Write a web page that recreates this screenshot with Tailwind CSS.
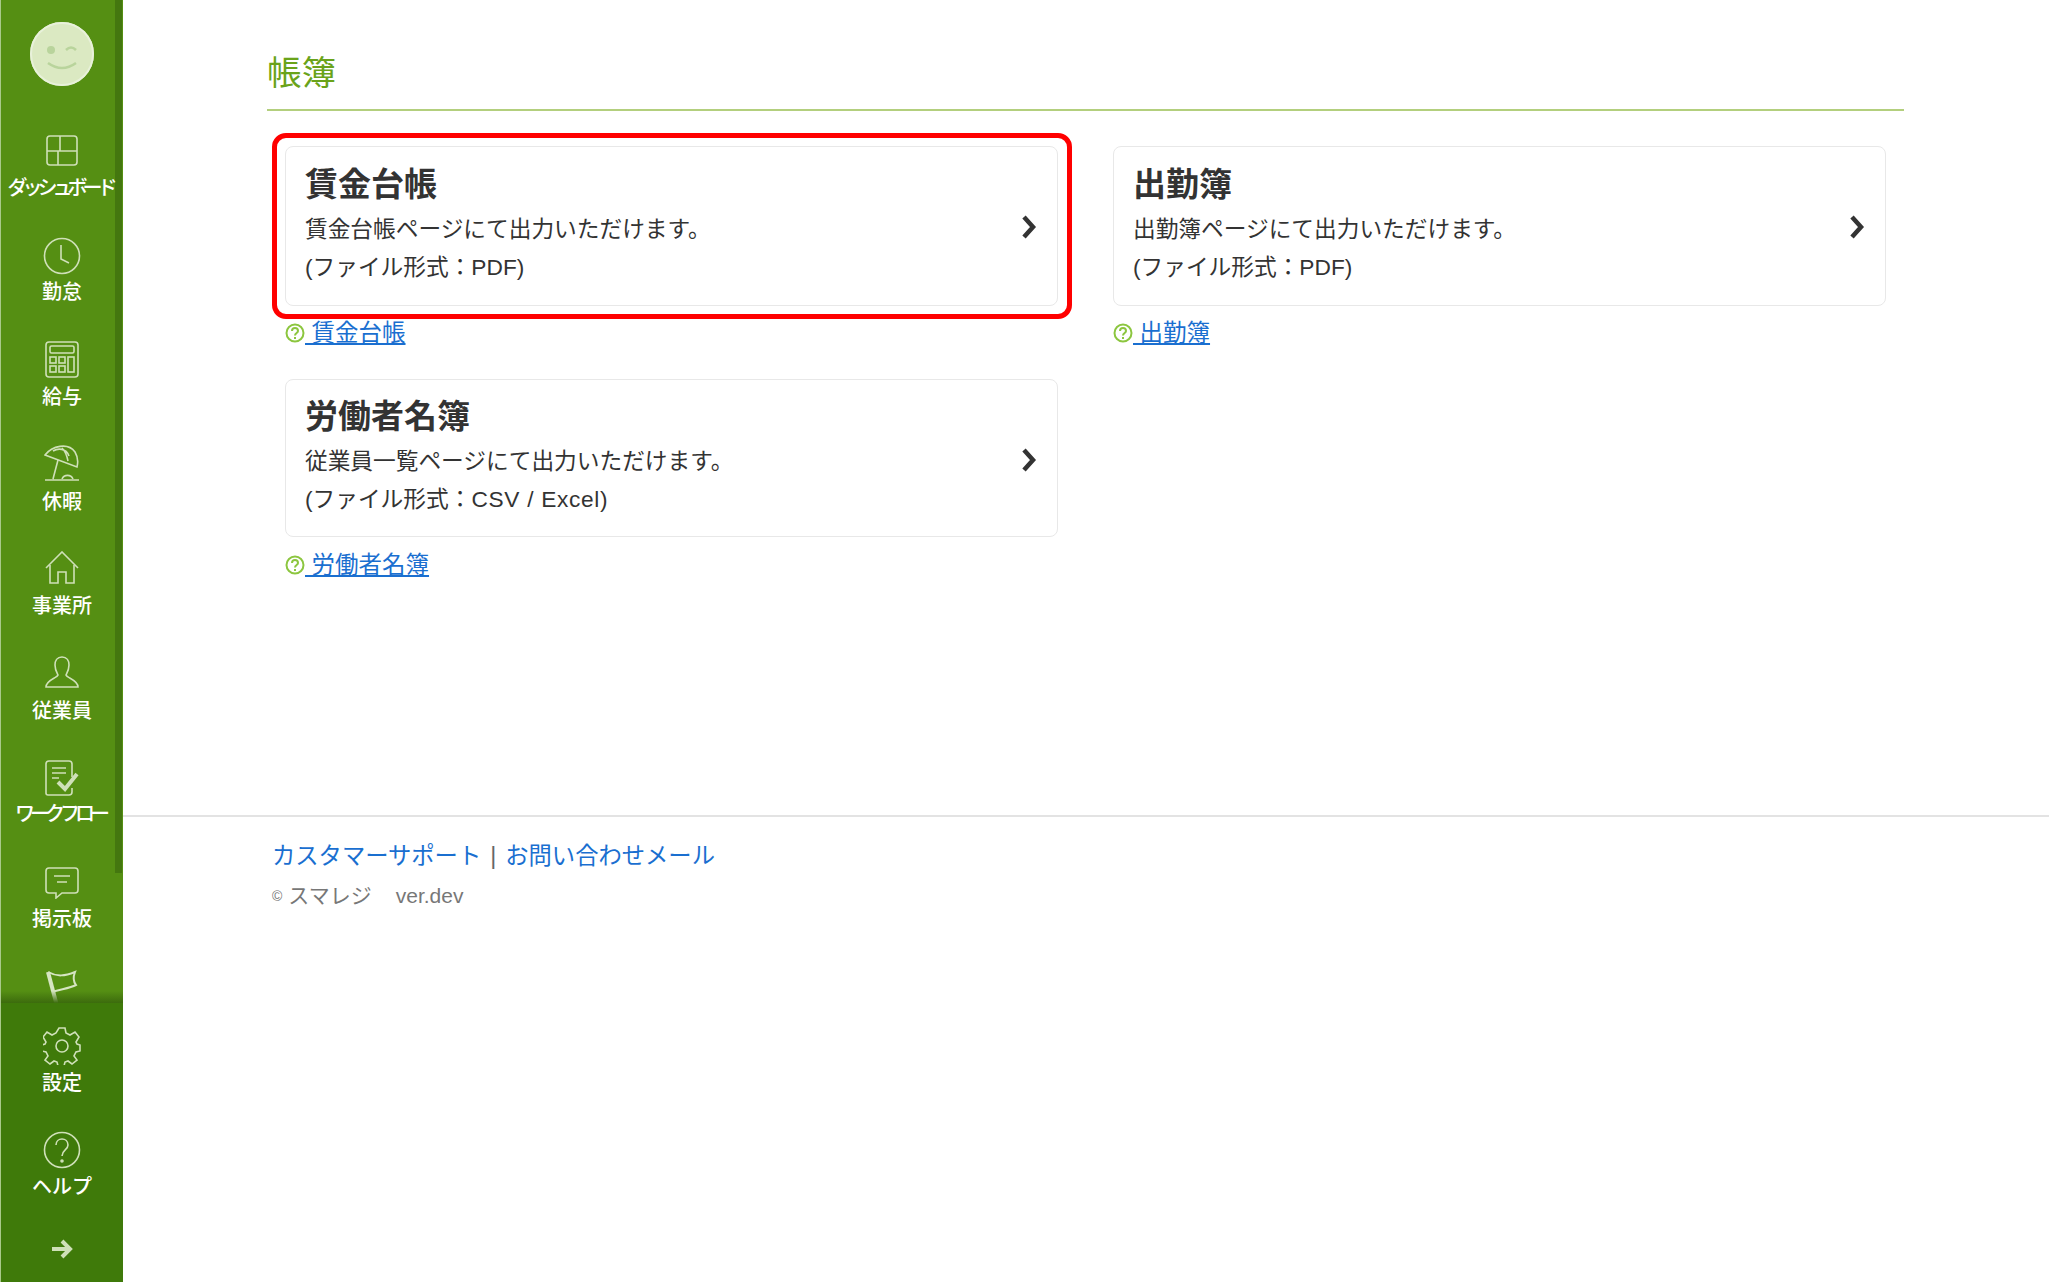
<!DOCTYPE html>
<html lang="ja">
<head>
  <meta charset="UTF-8">
  <title>帳簿</title>
  <script src="https://cdn.jsdelivr.net/npm/@tailwindcss/browser@4"></script>
</head>
<body class="bg-white font-['Liberation_Sans','Noto_Sans_CJK_JP',sans-serif] text-[#333]">
  <div class="flex h-[1282px] w-[2049px] overflow-hidden">

    <!-- sidebar -->
    <aside class="relative flex w-[123px] shrink-0 flex-col border-l border-[#a9c98a] bg-[#558f13] text-white">
      <div class="absolute right-[1px] top-0 h-[873px] w-[7px] bg-[#44770f]"></div>

      <div class="relative flex h-[1003px] flex-col overflow-hidden">
        <div class="flex h-[109px] shrink-0 items-center justify-center pb-[2px]">
          <svg width="66" height="66" viewBox="0 0 66 66">
            <circle cx="33" cy="33" r="32" fill="#dbe9c2"/>
            <circle cx="33" cy="33" r="31" fill="none" stroke="#e8f1da" stroke-width="2"/>
            <circle cx="22" cy="29" r="4" fill="#b9d49c"/>
            <path d="M37 29q5-5 10 0" fill="none" stroke="#b9d49c" stroke-width="2.500"/>
            <path d="M19 42q14 10 28 0" fill="none" stroke="#b9d49c" stroke-width="2.500"/>
          </svg>
        </div>

        <a class="flex h-[104.5px] shrink-0 flex-col items-center pt-[26px]">
          <svg class="h-[32px] w-[32px]" viewBox="0 0 32 32" fill="none" stroke="#cfe0b8" stroke-width="1.600"><rect x="1" y="1" width="30" height="29" rx="3"/><path d="M1 16h30M14 1v15M12 16v14"/></svg>
          <span class="mt-[8px] whitespace-nowrap pr-[4px] text-[20px] leading-[26px] font-medium tracking-[-5px]">ダッシュボード</span>
        </a>
        <a class="flex h-[104.5px] shrink-0 flex-col items-center pt-[23px]">
          <svg class="h-[38px] w-[38px]" viewBox="0 0 38 38" fill="none" stroke="#cfe0b8" stroke-width="1.600"><circle cx="19" cy="19" r="17.500"/><path d="M18 8v14l8 4"/></svg>
          <span class="mt-[4px] text-[20px] leading-[26px] font-medium">勤怠</span>
        </a>
        <a class="flex h-[104.5px] shrink-0 flex-col items-center pt-[23px]">
          <svg class="h-[38px] w-[34px]" viewBox="0 0 34 38" fill="none" stroke="#cfe0b8" stroke-width="1.600"><rect x="1" y="1" width="32" height="35" rx="3"/><rect x="5" y="5" width="24" height="7" rx="1.500"/><rect x="5" y="16" width="6" height="6"/><rect x="14" y="16" width="6" height="6"/><rect x="23" y="16" width="6" height="15"/><rect x="5" y="25" width="6" height="6"/><rect x="14" y="25" width="6" height="6"/></svg>
          <span class="mt-[5px] text-[20px] leading-[26px] font-medium">給与</span>
        </a>
        <a class="flex h-[104.5px] shrink-0 flex-col items-center pt-[22px]">
          <svg class="h-[36px] w-[36px]" viewBox="0 0 36 36" fill="none" stroke="#cfe0b8" stroke-width="1.600"><path d="M1 10C8 1 24-3 31 7c3 5 3 11 2 15z"/><path d="M9 6c5-3 13-3 16 5M18 3c3 3 5 8 6 13M14 15L9 34M1 35h34"/><path d="M18 34a6 6 0 0 1 11 0"/></svg>
          <span class="mt-[8px] text-[20px] leading-[26px] font-medium">休暇</span>
        </a>
        <a class="flex h-[104.5px] shrink-0 flex-col items-center pt-[24px]">
          <svg class="h-[34px] w-[34px]" viewBox="0 0 34 34" fill="none" stroke="#cfe0b8" stroke-width="1.600"><path d="M1 17L17 1l16 16"/><path d="M5 14v18h8V21h8v11h8V14"/></svg>
          <span class="mt-[8px] text-[20px] leading-[26px] font-medium">事業所</span>
        </a>
        <a class="flex h-[104.5px] shrink-0 flex-col items-center pt-[24px]">
          <svg class="h-[32px] w-[34px]" viewBox="0 0 34 32" fill="none" stroke="#cfe0b8" stroke-width="1.600"><path d="M17 1c5 0 7 4 7 8 0 5-2 8-3 10 1 3 12 5 12 12H1c0-7 11-9 12-12-1-2-3-5-3-10 0-4 2-8 7-8z"/></svg>
          <span class="mt-[10px] text-[20px] leading-[26px] font-medium">従業員</span>
        </a>
        <a class="flex h-[104.5px] shrink-0 flex-col items-center pt-[24px]">
          <svg class="h-[36px] w-[36px]" viewBox="0 0 36 36" fill="none" stroke="#cfe0b8" stroke-width="1.600"><path d="M28 17V4a3 3 0 0 0-3-3H5a3 3 0 0 0-3 3v29a2 2 0 0 0 2 2h21a3 3 0 0 0 3-3v-4"/><path d="M8 8h14M8 13h14M8 18h7"/><path d="M14 22l7 7L33 14" stroke-width="4"/></svg>
          <span class="mt-[5px] whitespace-nowrap pr-[4px] text-[20px] leading-[26px] font-medium tracking-[-5px]">ワークフロー</span>
        </a>
        <a class="flex h-[104.5px] shrink-0 flex-col items-center pt-[26px]">
          <svg class="h-[32px] w-[34px]" viewBox="0 0 34 32" fill="none" stroke="#cfe0b8" stroke-width="1.600"><path d="M4 1h26a3 3 0 0 1 3 3v19a3 3 0 0 1-3 3H17l-6 5v-5H4a3 3 0 0 1-3-3V4a3 3 0 0 1 3-3z"/><path d="M9 9h16M12 15h10"/></svg>
          <span class="mt-[7px] text-[20px] leading-[26px] font-medium">掲示板</span>
        </a>
        <a class="flex h-[104.5px] shrink-0 flex-col items-center pt-[25px]">
          <svg class="h-[36px] w-[34px]" viewBox="0 0 34 36" fill="none" stroke="#d6e5c2" stroke-width="2"><path d="M3 2l9 34" stroke-width="4"/><path d="M3 2c9 5 17 4 27 0-2 5-2 9 1 13-6 3-14 4-24 7"/></svg>
        </a>
        <div class="absolute bottom-0 left-0 h-[12px] w-full bg-gradient-to-b from-transparent to-[#3c6b0d]"></div>
      </div>

      <div class="flex flex-1 flex-col items-center bg-[#3f7a0a]">
        <a class="flex h-[104.5px] shrink-0 flex-col items-center pt-[24px]">
          <svg class="h-[38px] w-[38px]" viewBox="0 0 38 38" fill="none" stroke="#cfe0b8" stroke-width="1.600"><circle cx="19" cy="19" r="6"/><path d="M16 1h6l1 5 4 2 5-3 4 5-3 5 1 2 3 1v6l-4 1-2 4 3 4-5 4-4-3-3 1-1 4h-6l-1-4-3-1-4 3-5-4 3-4-2-4-4-1v-6l3-1 1-2-3-5 4-5 5 3 4-2z"/></svg>
          <span class="mt-[5px] text-[20px] leading-[26px] font-medium">設定</span>
        </a>
        <a class="flex h-[104.5px] shrink-0 flex-col items-center pt-[23px]">
          <svg class="h-[38px] w-[38px]" viewBox="0 0 38 38" fill="none" stroke="#cfe0b8" stroke-width="1.600"><circle cx="19" cy="19" r="17.500"/><path d="M13 14c0-4 3-6 6-6s6 2 6 6c0 5-6 5-6 11"/><circle cx="19" cy="30" r="1" fill="#cfe0b8"/></svg>
          <span class="mt-[5px] text-[20px] leading-[26px] font-medium">ヘルプ</span>
        </a>
        <svg class="mt-[27px] h-[20px] w-[22px]" viewBox="0 0 22 20" fill="none" stroke="#cfe0b8" stroke-width="4"><path d="M1 10h17M11 2l8 8-8 8"/></svg>
      </div>
    </aside>

    <!-- main -->
    <main class="flex min-w-0 flex-1 flex-col">
      <div class="h-[815px] shrink-0 pl-[144px] pr-[145px]">
        <h1 class="flex h-[111px] items-end border-b-2 border-[#b3cf7d] pb-[11px] text-[34.500px] leading-[50px] font-normal text-[#6aa31a]">帳簿</h1>

        <div class="mt-[35px] grid w-[1619px] grid-cols-[773px_773px] gap-x-[55px] pl-[18px]">
          <div>
            <div class="relative">
              <a class="flex h-[160px] items-center justify-between rounded-[8px] border border-[#e8e8e8] pl-[19px] pr-[20px]">
                <div class="-mt-[3px]">
                  <h2 class="text-[33px] leading-[42px] font-bold">賃金台帳</h2>
                  <p class="mt-[4px] text-[22.7px] leading-[38px]">賃金台帳ページにて出力いただけます。</p>
                  <p class="text-[22.7px] leading-[38px]">(ファイル形式：PDF)</p>
                </div>
                <svg class="mt-[2px] h-[24px] w-[16px]" viewBox="0 0 16 24" fill="none" stroke="#333" stroke-width="4.500"><path d="M3 2l9 10-9 10"/></svg>
              </a>
              <div class="absolute -top-[13px] -left-[13px] -right-[14px] -bottom-[13px] rounded-[14px] border-[5px] border-[#f00]"></div>
            </div>
            <div class="mt-[14px] flex h-[26px] items-center">
              <svg class="h-[20px] w-[20px]" viewBox="0 0 20 20" fill="none" stroke="#8cc63f" stroke-width="2"><circle cx="10" cy="10" r="8.500"/><path d="M7 8c0-2 1.500-3 3-3s3 1 3 3c0 2-3 2-3 4.500M10 14v2"/></svg>
              <a class="text-[23.5px] leading-[26px] text-[#1a6fd0] underline">&nbsp;賃金台帳</a>
            </div>
            <a class="mt-[33px] flex h-[158px] items-center justify-between rounded-[8px] border border-[#e8e8e8] pl-[19px] pr-[20px]">
              <div class="-mt-[2px]">
                <h2 class="text-[33px] leading-[42px] font-bold">労働者名簿</h2>
                <p class="mt-[4px] text-[22.7px] leading-[38px]">従業員一覧ページにて出力いただけます。</p>
                <p class="text-[22.7px] leading-[38px]">(ファイル形式：<span class="tracking-[0.7px]">CSV / Excel)</span></p>
              </div>
              <svg class="mt-[4px] h-[24px] w-[16px]" viewBox="0 0 16 24" fill="none" stroke="#333" stroke-width="4.500"><path d="M3 2l9 10-9 10"/></svg>
            </a>
            <div class="mt-[15px] flex h-[26px] items-center">
              <svg class="h-[20px] w-[20px]" viewBox="0 0 20 20" fill="none" stroke="#8cc63f" stroke-width="2"><circle cx="10" cy="10" r="8.500"/><path d="M7 8c0-2 1.500-3 3-3s3 1 3 3c0 2-3 2-3 4.500M10 14v2"/></svg>
              <a class="text-[23.5px] leading-[26px] text-[#1a6fd0] underline">&nbsp;労働者名簿</a>
            </div>
          </div>
          <div>
            <a class="flex h-[160px] items-center justify-between rounded-[8px] border border-[#e8e8e8] pl-[19px] pr-[20px]">
              <div class="-mt-[3px]">
                <h2 class="text-[33px] leading-[42px] font-bold">出勤簿</h2>
                <p class="mt-[4px] text-[22.7px] leading-[38px]">出勤簿ページにて出力いただけます。</p>
                <p class="text-[22.7px] leading-[38px]">(ファイル形式：PDF)</p>
              </div>
              <svg class="mt-[2px] h-[24px] w-[16px]" viewBox="0 0 16 24" fill="none" stroke="#333" stroke-width="4.500"><path d="M3 2l9 10-9 10"/></svg>
            </a>
            <div class="mt-[14px] flex h-[26px] items-center">
              <svg class="h-[20px] w-[20px]" viewBox="0 0 20 20" fill="none" stroke="#8cc63f" stroke-width="2"><circle cx="10" cy="10" r="8.500"/><path d="M7 8c0-2 1.500-3 3-3s3 1 3 3c0 2-3 2-3 4.500M10 14v2"/></svg>
              <a class="text-[23.5px] leading-[26px] text-[#1a6fd0] underline">&nbsp;出勤簿</a>
            </div>
          </div>
        </div>
      </div>

      <footer class="border-t-2 border-[#e3e3e3] pl-[149px] pt-[24px]">
        <p class="text-[23.3px] leading-[30px] text-[#666]">
          <a class="text-[#1a6fd0]">カスタマーサポート</a><span class="mx-[9px]">|</span><a class="text-[#1a6fd0]">お問い合わせメール</a>
        </p>
        <p class="mt-[11px] flex items-center text-[21px] leading-[28px] text-[#777]">
          <span class="mr-[6px] text-[14px]">©</span>スマレジ<span class="ml-[24px]">ver.dev</span>
        </p>
      </footer>
    </main>
  </div>
</body>
</html>
